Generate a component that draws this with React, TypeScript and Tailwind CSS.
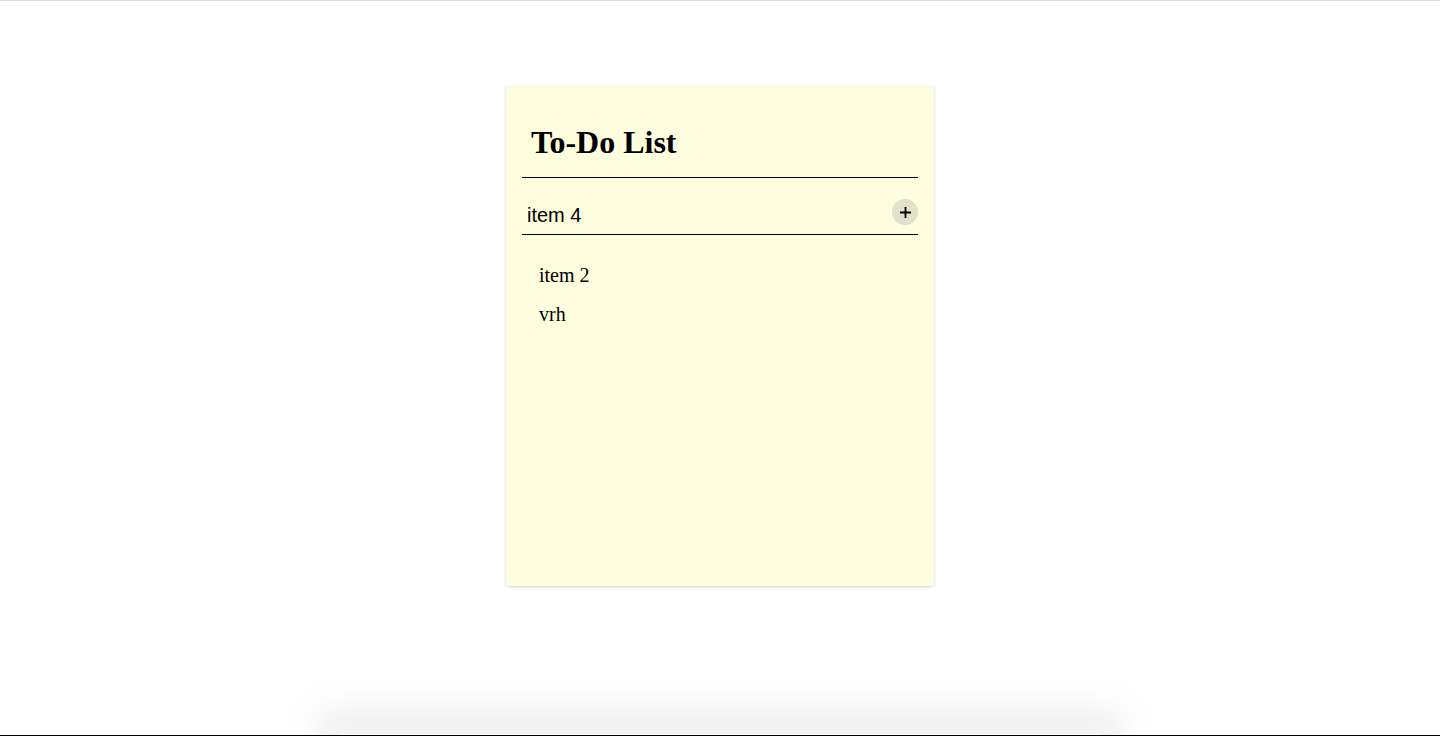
import { useState } from "react";

export default function App() {
  const [items] = useState(["item 2", "vrh"]);
  const [text, setText] = useState("item 4");

  return (
    <div className="h-[736px] overflow-hidden bg-white border-t border-[#d5dfdb] border-b border-b-black flex flex-col">
      <div className="flex-1 flex justify-center pt-[85px]">
        <div className="w-[428px] h-[500px] bg-[#fefedf] rounded-[3px] shadow-[0_1px_3px_rgba(0,0,0,0.18)] px-4 pt-[38px]">
          {/* header */}
          <div className="border-b border-black pb-[17px] pl-[9px]">
            <h1 className="font-['Liberation_Serif',serif] font-bold text-[32px] leading-[36px] text-black">
              To-Do List
            </h1>
          </div>

          {/* input row */}
          <div className="flex items-end border-b border-black h-[57px]">
            <input
              value={text}
              onChange={(e) => setText(e.target.value)}
              className="flex-1 h-[23px] leading-[23px] mb-[7px] bg-transparent outline-none pl-[5px] font-['Liberation_Sans',sans-serif] text-[20px] text-black"
            />
            <button className="w-[26px] h-[26px] mb-[9px] rounded-full bg-[#e1e1cc] flex items-center justify-center">
              <svg width="13" height="13" viewBox="0 0 13 13">
                <path d="M6.5 1v11M1 6.5h11" stroke="#000" strokeWidth="1.8" />
              </svg>
            </button>
          </div>

          {/* list */}
          <ul className="pt-[21px] pl-[17px] font-['Liberation_Serif',serif] text-[20px] text-black">
            {items.map((it) => (
              <li key={it} className="leading-[39px]">
                {it}
              </li>
            ))}
          </ul>
        </div>
      </div>
      <div className="mx-auto w-[760px] h-px shadow-[0_0_40px_24px_rgba(0,0,0,0.07)]" />
    </div>
  );
}
